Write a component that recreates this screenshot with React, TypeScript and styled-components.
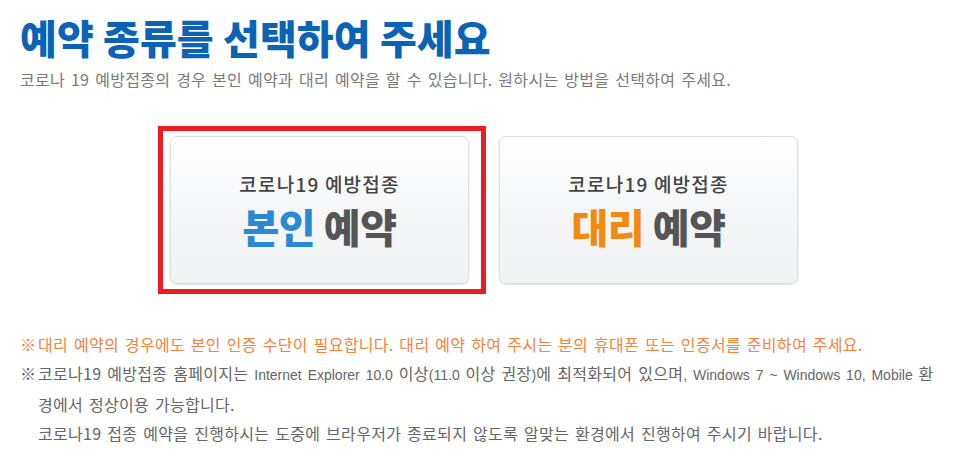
import styled, { createGlobalStyle } from "styled-components";

const GlobalStyle = createGlobalStyle`
  body {
    margin: 0;
    background: #ffffff;
    font-family: "Noto Sans CJK KR", "Noto Sans", sans-serif;
  }
`;

type ReserveType = {
  key: string;
  title: string;
  accent: string;
  accentColor: string;
  selected?: boolean;
};

const reserveTypes: ReserveType[] = [
  { key: "self", title: "코로나19 예방접종", accent: "본인", accentColor: "#2a89d4", selected: true },
  { key: "proxy", title: "코로나19 예방접종", accent: "대리", accentColor: "#f5890f" },
];

export default function App() {
  return (
    <>
      <GlobalStyle />
      <Page>
        <Title>예약 종류를 선택하여 주세요</Title>
        <Lead>
          코로나 19 예방접종의 경우 본인 예약과 대리 예약을 할 수 있습니다. 원하시는 방법을 선택하여 주세요.
        </Lead>

        <CardRow>
          {reserveTypes.map((item) => (
            <CardSlot key={item.key}>
              {item.selected && <Highlight />}
              <Card type="button">
                <CardLabel>{item.title}</CardLabel>
                <CardName>
                  <Accent $color={item.accentColor}>{item.accent}</Accent> 예약
                </CardName>
              </Card>
            </CardSlot>
          ))}
        </CardRow>

        <Notes>
          <Note $warn>대리 예약의 경우에도 본인 인증 수단이 필요합니다. 대리 예약 하여 주시는 분의 휴대폰 또는 인증서를 준비하여 주세요.</Note>
          <Note>
            코로나19 예방접종 홈페이지는 <Latin>Internet Explorer 10.0</Latin> 이상<Latin>(11.0</Latin> 이상 권장<Latin>)</Latin>에 최적화되어 있으며
            <Latin>, Windows 7 ~ Windows 10, Mobile</Latin> 환
            <br />
            경에서 정상이용 가능합니다.
            <br />
            코로나19 접종 예약을 진행하시는 도중에 브라우저가 종료되지 않도록 알맞는 환경에서 진행하여 주시기 바랍니다.
          </Note>
        </Notes>
      </Page>
    </>
  );
}

const Page = styled.div`
  padding: 13px 20px 0 20px;
  width: 953px;
  height: 460px;
  box-sizing: border-box;
  overflow: hidden;
`;

const Title = styled.h1`
  margin: 0;
  font-size: 40px;
  line-height: 48px;
  font-weight: 900;
  letter-spacing: 0.1px;
  color: #0b63b6;
`;

const Lead = styled.p`
  margin: 7px 0 0 0;
  font-size: 16px;
  line-height: 22px;
  letter-spacing: 0.3px;
  word-spacing: 2px;
  color: #7a7a7a;
  white-space: nowrap;
`;

const CardRow = styled.div`
  display: flex;
  gap: 30px;
  margin-top: 46px;
  padding-left: 150px;
`;

const CardSlot = styled.div`
  position: relative;
  width: 299px;
  height: 148px;
`;

const Highlight = styled.div`
  position: absolute;
  top: -10px;
  left: -12px;
  right: -17px;
  bottom: -10px;
  border: 5px solid #ec1c24;
  pointer-events: none;
`;

const Card = styled.button`
  display: flex;
  flex-direction: column;
  align-items: center;
  justify-content: center;
  width: 100%;
  height: 100%;
  padding: 6px 0 0 0;
  border: 1px solid #dcdde0;
  border-radius: 7px;
  background: linear-gradient(#ffffff, #f5f6f8 55%, #f1f2f4);
  box-shadow: 0 1px 2px rgba(0, 0, 0, 0.12);
  font-family: inherit;
  cursor: pointer;
`;

const CardLabel = styled.span`
  font-size: 19px;
  line-height: 26px;
  font-weight: 500;
  letter-spacing: 1.2px;
  color: #454545;
`;

const CardName = styled.span`
  font-size: 40px;
  line-height: 58px;
  font-weight: 900;
  letter-spacing: -0.5px;
  color: #555555;
`;

const Accent = styled.span<{ $color: string }>`
  color: ${({ $color }) => $color};
`;

const Notes = styled.ul`
  list-style: none;
  margin: 46px 0 0 0;
  padding: 0;
`;

const Note = styled.li<{ $warn?: boolean }>`
  position: relative;
  padding-left: 18px;
  font-size: 16px;
  line-height: 29px;
  letter-spacing: 0.3px;
  word-spacing: 2px;
  white-space: nowrap;
  color: ${({ $warn }) => ($warn ? "#f7823a" : "#666666")};

  &::before {
    content: "※";
    position: absolute;
    left: 0;
    top: 0;
  }
`;

const Latin = styled.span`
  font-family: "Liberation Sans", Arial, sans-serif;
  font-size: 14px;
  letter-spacing: 0;
`;
